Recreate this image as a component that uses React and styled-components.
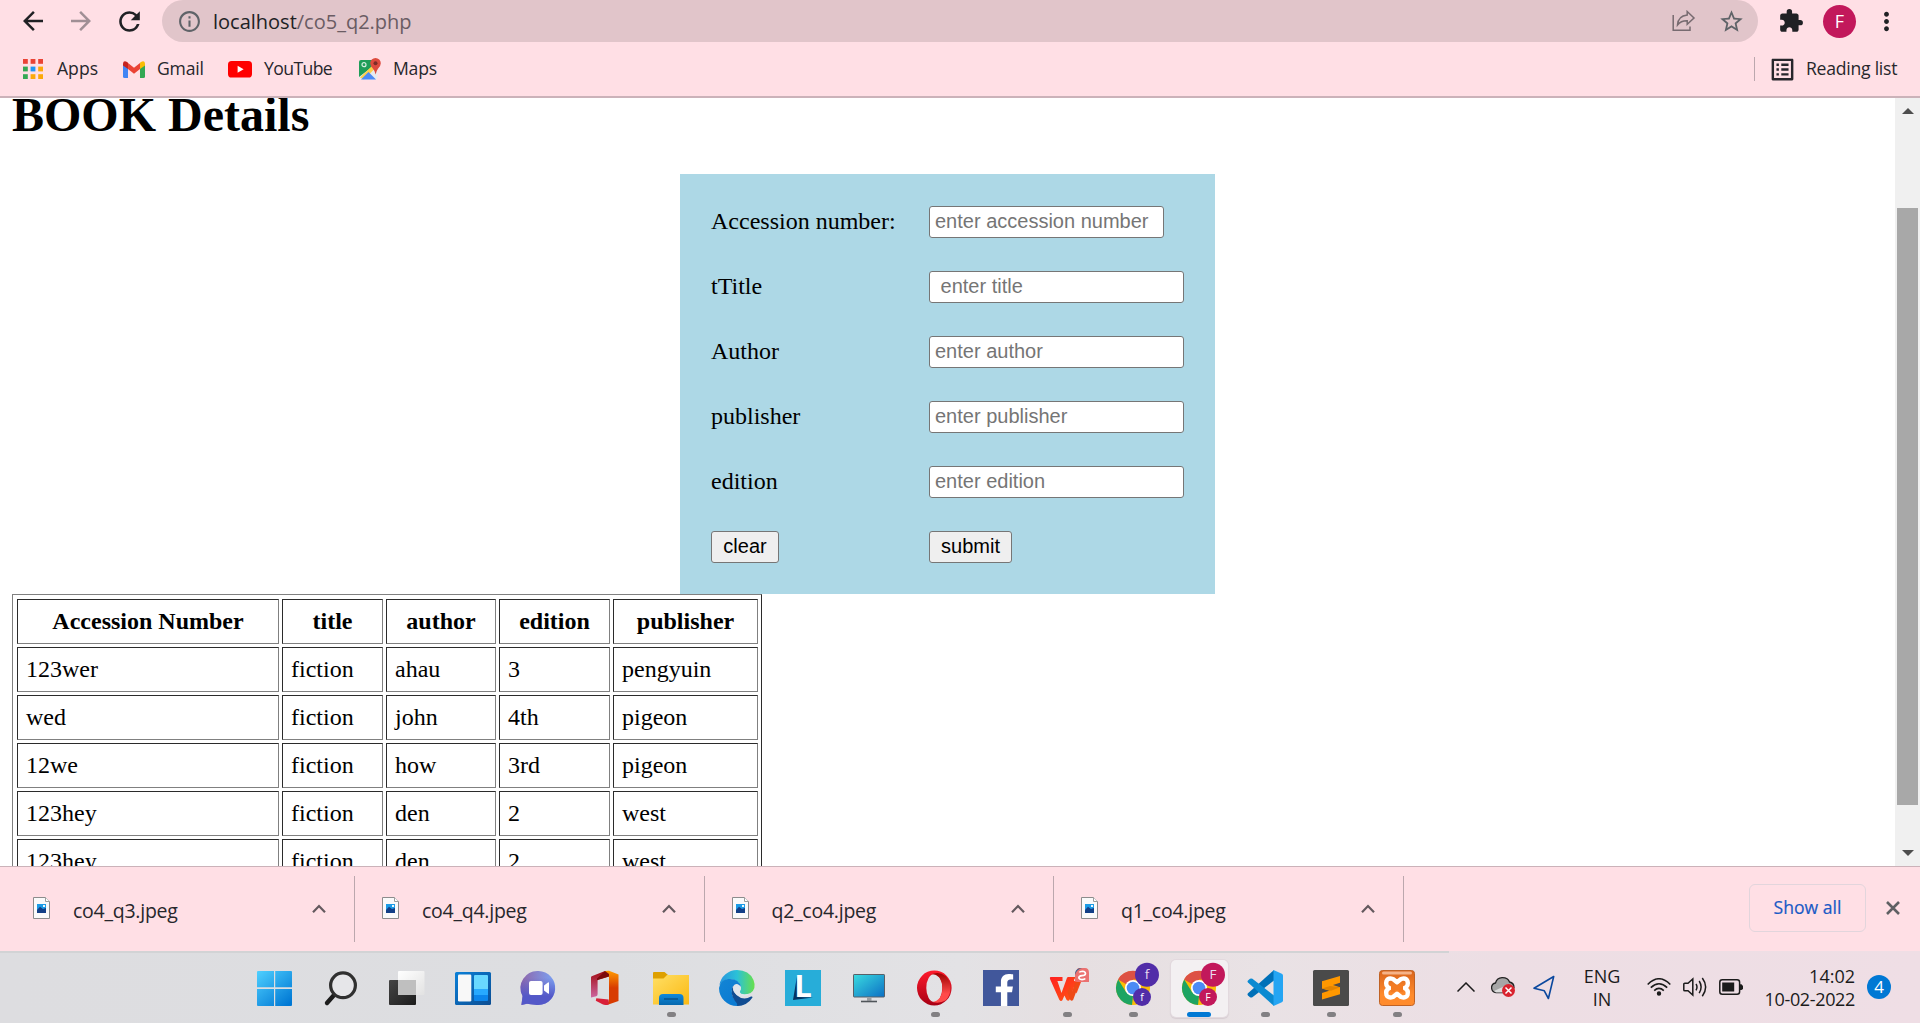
import React from "react";
import styled, { createGlobalStyle, css } from "styled-components";
import { MdArrowBack, MdArrowForward, MdRefresh, MdInfoOutline, MdStarBorder, MdExtension, MdMoreVert, MdListAlt } from "react-icons/md";
import { FaFacebookF } from "react-icons/fa";

const ui = `"Open Sans", "Noto Sans", sans-serif`;
const serif = `"Liberation Serif", "Times New Roman", serif`;
const sans = `"Liberation Sans", Arial, sans-serif`;

const GlobalStyle = createGlobalStyle`
  * { box-sizing: border-box; }
  body { margin: 0; overflow: hidden; background: #fff; }
  svg { display: block; flex: none; }
`;

const Screen = styled.div`
  width: 1920px;
  height: 1023px;
  display: flex;
  flex-direction: column;
  overflow: hidden;
`;

/* Browser header */
const Header = styled.header`
  height: 98px;
  flex: none;
  background: #ffdfe5;
  border-bottom: 2px solid #cbb2b9;
`;
const Toolbar = styled.div`
  height: 42px;
  display: flex;
  align-items: center;
  padding-left: 18px;
  color: #202124;
`;
const NavButton = styled.div`
  width: 48px;
  display: flex;
  color: ${(p) => (p.$muted ? "#a08f95" : "#202124")};
`;
const Omnibox = styled.div`
  width: 1596px;
  height: 42px;
  flex: none;
  margin-right: 20px;
  background: #e1c5ca;
  border-radius: 21px;
  display: flex;
  align-items: center;
  padding: 0 13px 0 15px;
  color: #5f6368;
`;
const Url = styled.div`
  flex: 1;
  margin-left: 11px;
  font: 20px/42px ${ui};
  letter-spacing: ${(p) => p.$ls}px;
  color: #6a5c63;
  padding-top: 1px;
  b { font-weight: 400; color: #202124; }
`;
const OmniActions = styled.div`
  display: flex;
  align-items: center;
  gap: 22px;
`;
const Avatar = styled.div`
  width: 33px;
  height: 33px;
  border-radius: 50%;
  background: #c2185b;
  color: #fff;
  font: 18px/33px ${ui};
  text-align: center;
  margin: 0 16px 0 19px;
`;
const Bookmarks = styled.div`
  height: 54px;
  display: flex;
  align-items: center;
  padding: 0 22px 0 23px;
`;
const Bookmark = styled.div`
  width: ${(p) => p.$w}px;
  flex: none;
  display: flex;
  align-items: center;
  gap: ${(p) => p.$gap || 13}px;
  font: 17.6px/30px ${ui};
  letter-spacing: ${(p) => p.$ls || 0}px;
  color: #27272c;
  white-space: nowrap;
  span { margin-top: -2px; }
`;
const ReadingArea = styled.div`
  margin-left: auto;
  display: flex;
  align-items: center;
  padding-left: 13px;
  border-left: 1px solid #bba7ad;
  height: 24px;
`;

/* Page */
const Viewport = styled.div`
  height: 768px;
  flex: none;
  display: flex;
  overflow: hidden;
`;
const Page = styled.main`
  width: 1895px;
  padding: 0 12px;
  font: 24px/27px ${serif};
  color: #000;
`;
const Title = styled.h1`
  margin: -11px 0 32px;
  font: bold 48px/55px ${serif};
`;
const BookForm = styled.form`
  width: 535px;
  height: 420px;
  margin: 0 auto;
  background: #add8e6;
  padding: 32px 31px;
  display: grid;
  grid-template-columns: 218px 255px;
  grid-auto-rows: 32px;
  row-gap: 33px;
  align-items: center;
`;
const Label = styled.label`
  padding-bottom: 2px;
`;
const Field = styled.input`
  width: ${(p) => (p.$short ? 235 : 255)}px;
  height: 32px;
  border: 1px solid #767676;
  border-radius: 3px;
  padding: 0 5px 1px;
  font: 20px ${sans};
  background: #fff;
  &::placeholder { color: #757575; opacity: 1; }
`;
const Button = styled.button`
  width: ${(p) => p.$w}px;
  height: 32px;
  padding: 0 0 1px;
  border: 1px solid #767676;
  border-radius: 3px;
  background: #efefef;
  color: #000;
  font: 20px ${sans};
`;
const BookTable = styled.table`
  width: 750px;
  table-layout: fixed;
  border-collapse: separate;
  border-spacing: 3px;
  padding: 1px 0 0 1px;
  border: 1px solid;
  border-color: #808080 #2b2b2b #2b2b2b #808080;
`;
const cell = css`
  height: 45px;
  padding: 0 8px;
  border: 1px solid;
  border-color: #2b2b2b #808080 #808080 #2b2b2b;
  line-height: 27px;
`;
const Th = styled.th`${cell}`;
const Td = styled.td`${cell}`;

const ScrollTrack = styled.div`
  width: 25px;
  background: #f0f0f0;
  display: flex;
  flex-direction: column;
  align-items: center;
`;
const Arrow = styled.div`
  width: 0;
  height: 0;
  border: 6px solid transparent;
  border-width: 0 6px 6px;
  border-bottom-color: #4d4d4d;
  margin-top: ${(p) => p.$top}px;
  transform: ${(p) => (p.$down ? "rotate(180deg)" : "none")};
`;
const Thumb = styled.div`
  width: 21px;
  height: 597px;
  margin-top: 94px;
  background: #a8a8a8;
`;

/* Download shelf */
const Shelf = styled.section`
  height: 85px;
  flex: none;
  display: flex;
  background: #ffdfe5;
  border-top: 1px solid #cbb2b9;
`;
const Download = styled.div`
  width: 349.5px;
  height: 66px;
  margin-top: 9px;
  padding: 0 28px 0 27px;
  border-right: 1px solid #bba7ad;
  display: flex;
  align-items: center;
  &:first-child { width: 355px; padding-left: 33px; }
`;
const FileName = styled.span`
  flex: 1;
  margin: 3px 0 0 23px;
  font: 19.5px/28px ${ui};
  letter-spacing: ${(p) => p.$ls}px;
  color: #27272c;
`;
const ShelfEnd = styled.div`
  margin: 17px 20px 0 auto;
  height: 48px;
  display: flex;
  align-items: center;
  gap: 20px;
`;
const ShowAll = styled.div`
  width: 117px;
  height: 48px;
  border: 1px solid #e2d5dc;
  border-radius: 6px;
  color: #1a5ac5;
  font: 17.6px/45px ${ui};
  -webkit-text-stroke: 0.2px;
  text-align: center;
`;

/* Taskbar */
const Taskbar = styled.footer`
  height: 72px;
  flex: none;
  display: flex;
  padding-left: 242px;
  background:
    linear-gradient(#d2d3d5, #d2d3d5) 0 0 / 1449px 2px no-repeat,
    linear-gradient(90deg, #dddde0 0, #dddee1 32%, #e3e2e5 50%, #e6dfe1 56%, #e9e2e5 66%, #eddee4 78%, #efdee5 100%);
`;
const Slot = styled.div`
  width: 66px;
  padding-top: 9px;
  display: flex;
  justify-content: center;
`;
const Tile = styled.div`
  width: 57px;
  height: 57px;
  border-radius: 5px;
  display: flex;
  flex-direction: column;
  align-items: center;
  justify-content: space-between;
  padding-top: 10px;
  background: ${(p) => (p.$active ? "#f3f0f2" : "transparent")};
  box-shadow: ${(p) => (p.$active ? "0 0 0 1px #e2d9de, 0 1px 1px 1px #d5ccd1" : "none")};
`;
const Indicator = styled.div`
  width: ${(p) => (p.$active ? 24 : 9)}px;
  height: 5px;
  border-radius: 3px;
  background: ${(p) => (p.$active ? "#0078d4" : "#828083")};
`;
const Tray = styled.div`
  margin: 0 29px 0 auto;
  height: 72px;
  display: flex;
  align-items: center;
`;
const TrayText = styled.div`
  width: ${(p) => p.$w}px;
  margin-left: ${(p) => p.$ml}px;
  padding-top: 1px;
  text-align: ${(p) => p.$align};
  font: 18px/23px ${ui};
  color: #1b1b1b;
  white-space: nowrap;
  div + div { letter-spacing: ${(p) => p.$ls2 || 0}px; }
`;
const TrayIcon = styled.div`
  margin-left: ${(p) => p.$ml}px;
`;
const Badge = styled.div`
  width: 24px;
  height: 24px;
  margin-left: 12px;
  border-radius: 50%;
  background: #0078d4;
  color: #fff;
  font: 17px/24px ${ui};
  text-align: center;
`;

const Icon = styled.svg`overflow: visible;`;
const A = ({ children }) => (
  <Icon width="36" height="36" viewBox="0 0 36 36">{children}</Icon>
);
const Grad = ({ id, a, b, x2 = 1, y2 = 1 }) => (
  <linearGradient id={id} x1="0" y1="0" x2={x2} y2={y2}>
    <stop offset="0" stopColor={a} /><stop offset="1" stopColor={b} />
  </linearGradient>
);

const WindowsLogo = () => (
  <A>
    <defs>
      <linearGradient id="win" gradientUnits="userSpaceOnUse" x1="0" y1="1" x2="30" y2="36">
        <stop offset="0" stopColor="#4fd0ff" /><stop offset="1" stopColor="#0078d4" />
      </linearGradient>
    </defs>
    <path fill="url(#win)" d="M1 1H17V17.3H0V2Q0 1 1 1ZM18.2 1H34Q35 1 35 2V17.3H18.2ZM0 19H17V36H1Q0 36 0 35ZM18.2 19H35V35Q35 36 34 36H18.2Z" />
  </A>
);
const SearchIcon = () => (
  <A>
    <path d="M11.5 24.5L4 33" stroke="#1d1d1d" strokeWidth="4.4" strokeLinecap="round" />
    <circle cx="20" cy="15.3" r="12.4" fill="#e6e6e9" stroke="#303030" strokeWidth="3.2" />
  </A>
);
const TaskView = () => (
  <A>
    <defs><Grad id="tv" a="#454545" b="#1c1c1c" /><Grad id="tv2" a="#fff" b="#e2e2e2" /></defs>
    <rect x="0" y="10" width="27" height="25" rx="1" fill="url(#tv)" />
    <rect x="9" y="1" width="26.5" height="24" rx="1" fill="url(#tv2)" />
    <path d="M9 10H27V25H10Q9 25 9 24Z" fill="#bfbfbf" />
  </A>
);
const Widgets = () => (
  <A>
    <defs><Grad id="wd" a="#0a80d8" b="#0c4d92" /></defs>
    <rect y="2" width="36" height="33" rx="1.5" fill="url(#wd)" />
    <rect x="3" y="4.5" width="13.3" height="27" rx="1.3" fill="#f8f8f8" />
    <path d="M20 5H32Q33 5 33 6V19H19V6Q19 5 20 5Z" fill="#69d8ff" />
    <path d="M19 19H33V25H19Z" fill="#27aaff" />
    <path d="M19 25H33V30Q33 31 32 31H20Q19 31 19 30Z" fill="#0b86ec" />
  </A>
);
const Chat = () => (
  <A>
    <defs>
      <linearGradient id="ct" x1="0" y1="0" x2="1" y2="0"><stop offset="0" stopColor="#8f65a9" /><stop offset="1" stopColor="#7aa3f5" /></linearGradient>
      <linearGradient id="ct2" x1="0" y1="0" x2="0" y2="1"><stop offset=".2" stopColor="#5358c8" stopOpacity="0" /><stop offset=".75" stopColor="#5358c8" /></linearGradient>
    </defs>
    {["url(#ct)", "url(#ct2)"].map((fill) => (
      <path key={fill} d="M17.5 1A17 17 0 1 1 14 34.7Q9 34 6 33.7L.4 35L1.6 26A17 17 0 0 1 17.5 1Z" fill={fill} />
    ))}
    <rect x="8" y="11" width="13.6" height="14" rx="2" fill="#fff" />
    <path d="M23 15.6L27 12.4Q28 12 28 13V23.3Q28 24 27 23.4L23 20.4Z" fill="#fff" />
  </A>
);
const Office = () => (
  <A>
    <defs>
      <Grad id="of1" a="#a20b12" b="#cc67a0" x2={0} />
      <Grad id="of2" a="#ff9a00" b="#d83b01" x2={0} y2={0.5} />
    </defs>
    <path d="M18 1L4.7 6.3Q4 6.7 4 7.6V27.5L9.3 26.2Q10.6 25.7 10.6 24V9.8L22 6.3V1.2Z" fill="url(#of1)" />
    <path d="M18 1L22 .8L31.5 4.4V31L20 35L22 30V6.5L15 8.6Z" fill="url(#of2)" />
    <path d="M18 1L22 4V6.5L10 10.2V8.5Z" fill="#7c0a0c" />
    <path d="M9.3 28.3L21.6 29.5V34.5Q18 35.6 15.5 34.3L8.8 30.7Z" fill="#d91f38" />
  </A>
);
const Explorer = () => (
  <A>
    <defs><Grad id="ex" a="#ffdf65" b="#fbb912" /><Grad id="ex2" a="#1089dc" b="#0668ae" x2={0} /></defs>
    <path d="M0 3Q0 2 1 2H11.5L15 5V9H0Z" fill="#dea000" />
    <path d="M0 8.4H10.5L14 5H36V34.5H0Z" fill="url(#ex)" />
    <path d="M6 35V28Q6 24 10 24H26.5Q30.5 24 30.5 28V35Z" fill="url(#ex2)" />
    <path d="M11 29H25" stroke="#084f87" strokeWidth="1.4" />
  </A>
);
const Edge = () => (
  <A>
    <defs>
      <linearGradient id="eg1"><stop offset="0" stopColor="#2895df" /><stop offset=".5" stopColor="#2bc1d8" /><stop offset="1" stopColor="#68e04b" /></linearGradient>
      <Grad id="eg2" a="#1385d4" b="#0877d2" />
    </defs>
    <path d="M.4 15A18 18 0 0 1 18 0Q30 0 34.5 10Q38 19 31 23.6Q26 26 22 24Q20 22 22 19Q22 10 11 9Q4 10 .4 15Z" fill="url(#eg1)" />
    <path d="M0 18Q1 10 9 9Q20 8 22 17Q17 11 13.5 17Q11 25 17 31Q22 35 27 33Q23 36 18 36A18 18 0 0 1 0 18Z" fill="url(#eg2)" />
    <path d="M14.8 14.5Q10 23 16 31Q19 34 18 36Q28 36 33.5 27.5Q33.5 26 32 26.6Q24 31 17.5 25Q12 20 14.8 14.5Z" fill="#104c92" />
    <path d="M15 16Q18 12 22 17Q22 20 20 22Q23 26 32 23Q25 29 18 25Q13 21 15 16Z" fill="#dfe5ec" />
  </A>
);
const Lively = () => (
  <A>
    <rect width="36" height="36" fill="#27add9" />
    <path d="M12 6L8 30L28 27.5L13 27Z" fill="#063463" />
    <text x="9.2" y="27.4" fontFamily="Open Sans, sans-serif" fontWeight="700" fontSize="31" fill="#fff">L</text>
  </A>
);
const Monitor = () => (
  <A>
    <defs><Grad id="mo" a="#3adbe0" b="#0c6fc4" /></defs>
    <rect x="2.5" y="4.5" width="31" height="22.5" rx=".6" fill="url(#mo)" stroke="#586068" />
    <path d="M16 27H20.5V30.8H16Z" fill="#9b9fa3" />
    <path d="M10 31.5H26" stroke="#50555a" strokeWidth="1.6" />
  </A>
);
const Opera = () => (
  <A>
    <defs><Grad id="op" a="#ff1b2d" b="#a70014" x2={0} /><Grad id="op2" a="#9c0000" b="#ff4b4b" x2={0} y2={0.7} /></defs>
    <path fillRule="evenodd" d="M17.3.5A17.3 17.5 0 0 1 17.3 35.5A17.3 17.5 0 0 1 17.3.5ZM17.3 4A8 14 0 0 0 17.3 32A8 14 0 0 0 17.3 4Z" fill="url(#op)" />
    <path d="M12 5.5Q21 0 28.8 6.3A17.3 17.5 0 0 1 28.8 30.2Q21 35 12 30.5Q17 34 22 28.8Q25.4 24.6 25.4 18Q25.4 11.4 22 7.2Q17 2.5 12 5.5Z" fill="url(#op2)" />
  </A>
);
const FbTile = styled.div`
  width: 36px;
  height: 36px;
  background: #41579b;
  display: flex;
  justify-content: flex-end;
  align-items: flex-end;
  padding-right: 1px;
  color: #fff;
  overflow: hidden;
`;
const Facebook = () => (
  <FbTile><FaFacebookF size={32} viewBox="-64 0 370 505" /></FbTile>
);
const Wps = () => (
  <A>
    <defs><Grad id="wp" a="#ff2020" b="#ff5a12" /></defs>
    <path d="M1.5 7H13.5V11H8.4L12.5 23L18 7.8Q18.3 7 19.3 7H25V11L32 12L27.5 23.5L25 17L20.8 29.5Q19.5 32 17.5 29.8L15.4 25.5L13.5 30Q12 32 10.3 29.7L1 9Q.5 7.4 1.5 7Z" fill="url(#wp)" />
    <path d="M24 7H33L31.2 11L24.2 29.7Q22.7 31.8 21 29.5L18.5 22L21 16L23 21.5L27 11Z" fill="#ee4a16" />
    <path d="M29-2H36Q40-2 40 3V12H28Q26 12 26 10V3Z" fill="#eb7170" />
    <path d="M26 3Q27-2 33-2Q27 0 26 5Z" fill="#46658d" />
    <path d="M30.3 2.4Q31 1.2 33.5 1.2Q36.5 1.4 36.5 3.6Q36.3 5.6 33 5.6Q29.7 5.8 29.8 8Q30.3 9.6 33 9.6Q35.5 9.6 36.3 8.6" fill="none" stroke="#fff" strokeWidth="1.6" />
  </A>
);
const Chrome = ({ color, letter }) => (
  <A>
    <circle cx="18" cy="18" r="17" fill="#fbbc05" />
    <path d="M18 18L3 9.5A17.3 17.3 0 0 1 33 9.5H18Z" fill="#dd5144" />
    <path d="M3.2 9.5L11 22L18 26L17 35A17 17 0 0 1 3.2 9.5Z" fill="#1da462" />
    <circle cx="18" cy="18" r="8" fill="#fff" />
    <circle cx="18" cy="18" r="6.3" fill="#4c8bf5" />
    <circle cx="32" cy="4.7" r="12" fill={color} />
    <text x="32" y="9.3" textAnchor="middle" fontFamily="Open Sans, sans-serif" fontSize="13.5" fill="#eadcf0">{letter}</text>
    <circle cx="27" cy="27" r="9" fill={color} />
    <text x="27" y="30.7" textAnchor="middle" fontFamily="Open Sans, sans-serif" fontSize="10.5" fill="#fff">{letter}</text>
  </A>
);
const VsCode = () => (
  <A>
    <path d="M27 0L1 23.3Q0 24.5 1 25.6L3 27.2Q4.2 28 5.4 27.2L27 10.5Z" fill="#0070b8" />
    <path d="M27 36L1 12.6Q0 11.5 1 10.4L3 8.8Q4.2 8 5.4 8.8L27 25.5Z" fill="#0b8ad1" />
    <path d="M26.5 0L34.8 3.7Q36 4.3 36 5.5V30.5Q36 31.7 34.8 32.3L26.5 36Z" fill="#25a5f3" />
  </A>
);
const Sublime = () => (
  <A>
    <rect width="36" height="36" rx="1.5" fill="#4a4a4a" />
    <path d="M9 11.2L27 6V12.8L9 18.4Z" fill="#ff9800" />
    <path d="M9 11.5V18.4L27 24V17.2Z" fill="#ff9800" />
    <path d="M9 23L27 17.2V24.2L9 29.4Z" fill="#ff9800" />
    <path d="M9 18.4L17 16L27 17.2L18 20.8Z" fill="#e28400" />
  </A>
);
const Xampp = () => (
  <A>
    <defs><Grad id="xa" a="#d9641c" b="#ff8b2c" x2={0} y2={0.7} /></defs>
    <rect x=".5" y=".5" width="35" height="35" rx="3" fill="url(#xa)" stroke="#c06224" />
    <rect x="3" y="1.6" width="30" height="3" rx="1.5" fill="#f5b287" />
    <g fill="none" stroke="#fff" strokeWidth="4.4" strokeLinejoin="round">
      <path d="M18 12.3L14 9Q9 7.5 7.5 11Q6 16 10.5 18Q6 20 7.5 25Q9 28.5 14 27L18 23.7L22 27Q27 28.5 28.5 25Q30 20 25.5 18Q30 16 28.5 11Q27 7.5 22 9Z" />
    </g>
    <path d="M12 14H16V16H20V14H24V22H20V20H16V22H12Z" fill="#f47c24" />
  </A>
);

const AppsGrid = () => (
  <svg width="20" height="20">
    {["#ea4335", "#ea4335", "#ea4335", "#34a853", "#2196f3", "#fba90a", "#34a853", "#fba90a", "#fba90a"].map((c, i) => (
      <rect key={i} x={(i % 3) * 7.6} y={Math.floor(i / 3) * 7.6} width="4.8" height="4.8" fill={c} />
    ))}
  </svg>
);
const Gmail = () => (
  <svg width="22" height="17" viewBox="0 0 22 17">
    <path d="M0 3V15.5Q0 17 1.5 17H5V7Z" fill="#4285f4" />
    <path d="M22 3V15.5Q22 17 20.5 17H17V7Z" fill="#34a853" />
    <path d="M5 2L11 6.7L17 2V8L11 12.7L5 8Z" fill="#ea4335" />
    <path d="M0 2.6Q.4-1 4 .9L5 1.8V8L0 4.4Z" fill="#c5221f" />
    <path d="M22 2.6Q21.6-1 18 .9L17 1.8V8L22 4.4Z" fill="#fbbc04" />
  </svg>
);
const YouTube = () => (
  <svg width="24" height="17" viewBox="0 0 24 17">
    <rect width="24" height="16.5" rx="3.6" fill="#f00" />
    <path d="M9.6 4.8L15.6 8.2L9.6 11.7Z" fill="#fff" />
  </svg>
);
const Maps = () => (
  <svg width="22" height="22" viewBox="0 0 22 22">
    <rect y="2" width="18.5" height="19.5" rx="2" fill="#e9ebee" />
    <path d="M2 2H14L13 9L0 19V4Q0 2 2 2Z" fill="#1f9d58" />
    <path d="M1 19.5L13 8L16 10.5L5 21.5Z" fill="#ffd04a" />
    <path d="M2 21.5L9.5 14L17 21.5Z" fill="#4c8af5" />
    <circle cx="5" cy="6.7" r="2" fill="none" stroke="#d6eee0" strokeWidth="1.2" />
    <path d="M16.5 0A5.3 5.3 0 0 1 21.8 5.3Q21.8 8 19 10.8Q17.3 13 16.6 16.5Q16 13 14 10.8Q11.2 8 11.2 5.3A5.3 5.3 0 0 1 16.5 0Z" fill="#dd4b3e" />
    <circle cx="16.5" cy="5.3" r="2" fill="#7d2d28" />
  </svg>
);
const Share = () => (
  <svg width="24" height="22" viewBox="0 0 24 22" fill="none" stroke="#776b70" strokeWidth="1.5">
    <path d="M1.2 5V20.2H18V16.5" />
    <path d="M15.2 1.5L22 8L15.2 14.3V10.8Q9 10.6 5.5 15Q6 6 15.2 5Z" />
  </svg>
);
const ImageFile = () => (
  <svg width="17" height="24" viewBox="0 0 17 24">
    <path d="M.5.5H12.5L16.5 4.5V21.5H.5Z" fill="#fafafa" stroke="#8c8c8c" />
    <path d="M12.5.5V4.5H16.5" fill="#fff" stroke="#9c9c9c" />
    <rect x="4" y="7" width="9" height="9" fill="#1c9be6" />
    <path d="M4 13L7 9.8L10 12L13 11V16H4Z" fill="#123f86" />
    <rect x="10" y="8" width="2" height="2" fill="#e8f5fc" />
  </svg>
);
const Chevron = () => (
  <svg width="14" height="10" viewBox="0 0 14 10"><path d="M1 8.3L7 2L13 8.3" fill="none" stroke="#64595e" strokeWidth="2.2" /></svg>
);
const Close = () => (
  <svg width="14" height="14" viewBox="0 0 14 14"><path d="M1 1L13 13M13 1L1 13" stroke="#5f6063" strokeWidth="2.6" /></svg>
);

const fields = [
  ["Accession number:", "enter accession number", true],
  ["tTitle", "\u00a0enter title"],
  ["Author", "enter author"],
  ["publisher", "enter publisher"],
  ["edition", "enter edition"],
];
const columns = [["Accession Number", 262], ["title", 101], ["author", 110], ["edition", 111], ["publisher", 145]];
const books = [
  ["123wer", "fiction", "ahau", "3", "pengyuin"],
  ["wed", "fiction", "john", "4th", "pigeon"],
  ["12we", "fiction", "how", "3rd", "pigeon"],
  ["123hey", "fiction", "den", "2", "west"],
  ["123hey", "fiction", "den", "2", "west"],
];
const tasks = [
  [<WindowsLogo />], [<SearchIcon />], [<TaskView />], [<Widgets />], [<Chat />], [<Office />],
  [<Explorer />, 1], [<Edge />], [<Lively />], [<Monitor />], [<Opera />, 1], [<Facebook />],
  [<Wps />, 1], [<Chrome color="#512da8" letter="f" />, 1], [<Chrome color="#c2185b" letter="F" />, 2],
  [<VsCode />, 1], [<Sublime />, 1], [<Xampp />, 1],
];

export default function App() {
  return (
    <Screen>
      <GlobalStyle />
      <Header>
        <Toolbar>
          <NavButton><MdArrowBack size={30} /></NavButton>
          <NavButton $muted><MdArrowForward size={30} /></NavButton>
          <NavButton><MdRefresh size={31} /></NavButton>
          <Omnibox>
            <MdInfoOutline size={25} />
            <Url $ls={0}><b>localhost</b>/co5_q2.php</Url>
            <OmniActions><Share /><MdStarBorder size={27} /></OmniActions>
          </Omnibox>
          <MdExtension size={26} />
          <Avatar>F</Avatar>
          <MdMoreVert size={29} />
        </Toolbar>
        <Bookmarks>
          <Bookmark $w={100} $gap={14}><AppsGrid /><span>Apps</span></Bookmark>
          <Bookmark $w={105} $gap={12} $ls={-0.2}><Gmail /><span>Gmail</span></Bookmark>
          <Bookmark $w={131} $gap={12} $ls={-0.6}><YouTube /><span>YouTube</span></Bookmark>
          <Bookmark $w={100} $gap={12} $ls={-0.2}><Maps /><span>Maps</span></Bookmark>
          <ReadingArea>
            <Bookmark $w={130} $gap={9} $ls={-0.25}><MdListAlt size={29} /><span>Reading list</span></Bookmark>
          </ReadingArea>
        </Bookmarks>
      </Header>

      <Viewport>
        <Page>
          <Title>BOOK Details</Title>
          <BookForm>
            {fields.map(([label, hint, short]) => (
              <React.Fragment key={label}>
                <Label>{label}</Label>
                <Field placeholder={hint} $short={short} />
              </React.Fragment>
            ))}
            <Button type="button" $w={68}>clear</Button>
            <Button type="button" $w={83}>submit</Button>
          </BookForm>
          <BookTable>
            <colgroup>{columns.map(([n, w]) => <col key={n} width={w} />)}</colgroup>
            <thead><tr>{columns.map(([n]) => <Th key={n}>{n}</Th>)}</tr></thead>
            <tbody>
              {books.map((row, i) => <tr key={i}>{row.map((v, j) => <Td key={j}>{v}</Td>)}</tr>)}
            </tbody>
          </BookTable>
        </Page>
        <ScrollTrack>
          <Arrow $top={10} />
          <Thumb />
          <Arrow $top={45} $down />
        </ScrollTrack>
      </Viewport>

      <Shelf>
        {["co4_q3.jpeg", "co4_q4.jpeg", "q2_co4.jpeg", "q1_co4.jpeg"].map((name) => (
          <Download key={name}><ImageFile /><FileName $ls={-0.25}>{name}</FileName><Chevron /></Download>
        ))}
        <ShelfEnd><ShowAll>Show all</ShowAll><Close /></ShelfEnd>
      </Shelf>

      <Taskbar>
        {tasks.map(([icon, state], i) => (
          <Slot key={i}>
            <Tile $active={state === 2}>{icon}{state && <Indicator $active={state === 2} />}</Tile>
          </Slot>
        ))}
        <Tray>
          <svg width="18" height="10" viewBox="0 0 18 10"><path d="M.5 9.5L9 1L17.5 9.5" fill="none" stroke="#1b1b1b" strokeWidth="1.5" /></svg>
          <TrayIcon $ml={16}>
            <svg width="25" height="20" viewBox="0 1 25 20">
              <path d="M5 16.5A4.8 4.8 0 0 1 4.5 7Q6 2 11 1.7Q17 1.5 18.5 6Q23 7 23 11.5L20 16.5Z" fill="#a6a6a6" stroke="#222" strokeWidth="1.3" />
              <path d="M3 15L17 8.5L22 12L14 16.5H5Z" fill="#dcdcdc" />
              <circle cx="17.5" cy="14.5" r="6.5" fill="#d9232e" />
              <path d="M14.5 11.5L20.5 17.5M20.5 11.5L14.5 17.5" stroke="#fff" strokeWidth="1.5" />
            </svg>
          </TrayIcon>
          <TrayIcon $ml={17}>
            <svg width="22" height="25" viewBox="0 0 22 25"><path d="M20.7 1.5L1 13.2L11.3 15.8L15.4 23.5Z" fill="none" stroke="#0b489e" strokeWidth="1.6" strokeLinejoin="round" /></svg>
          </TrayIcon>
          <TrayText $ml={26} $w={42} $align="center"><div>ENG</div><div>IN</div></TrayText>
          <TrayIcon $ml={24}>
            <svg width="24" height="18" viewBox="0 0 24 18" fill="none" stroke="#1b1b1b" strokeWidth="1.6">
              <path d="M.7 6.5Q12-5 23.3 6.5M3.8 9.7Q12 1.8 20.2 9.7M7.2 12.6Q12 8.2 16.8 12.6" />
              <circle cx="12" cy="15.5" r="1.4" fill="#1b1b1b" />
            </svg>
          </TrayIcon>
          <TrayIcon $ml={12}>
            <svg width="25" height="20" viewBox="0 0 25 20" fill="none" stroke="#1b1b1b" strokeWidth="1.5">
              <path d="M.8 7.3V13Q.8 13.8 1.8 13.8H5L9.8 18V2L5 6.3H1.8Q.8 6.3 .8 7.3ZM13 7Q15 10 13 13.3M16.2 4Q20 10 16.2 16.2M19.3 1Q26 10 19.3 19.3" />
            </svg>
          </TrayIcon>
          <TrayIcon $ml={11}>
            <svg width="24" height="16" viewBox="0 0 24 16">
              <rect x=".8" y=".8" width="19.8" height="14.4" rx="2.5" fill="none" stroke="#1b1b1b" strokeWidth="1.5" />
              <rect x="3.2" y="3.5" width="12" height="9" fill="#1b1b1b" /><path d="M21 5.2H22.5L24 7V10L22.5 11H21Z" fill="#1b1b1b" />
            </svg>
          </TrayIcon>
          <TrayText $ml={12} $w={100} $align="right" $ls2={-0.35}><div>14:02</div><div>10-02-2022</div></TrayText>
          <Badge>4</Badge>
        </Tray>
      </Taskbar>
    </Screen>
  );
}
